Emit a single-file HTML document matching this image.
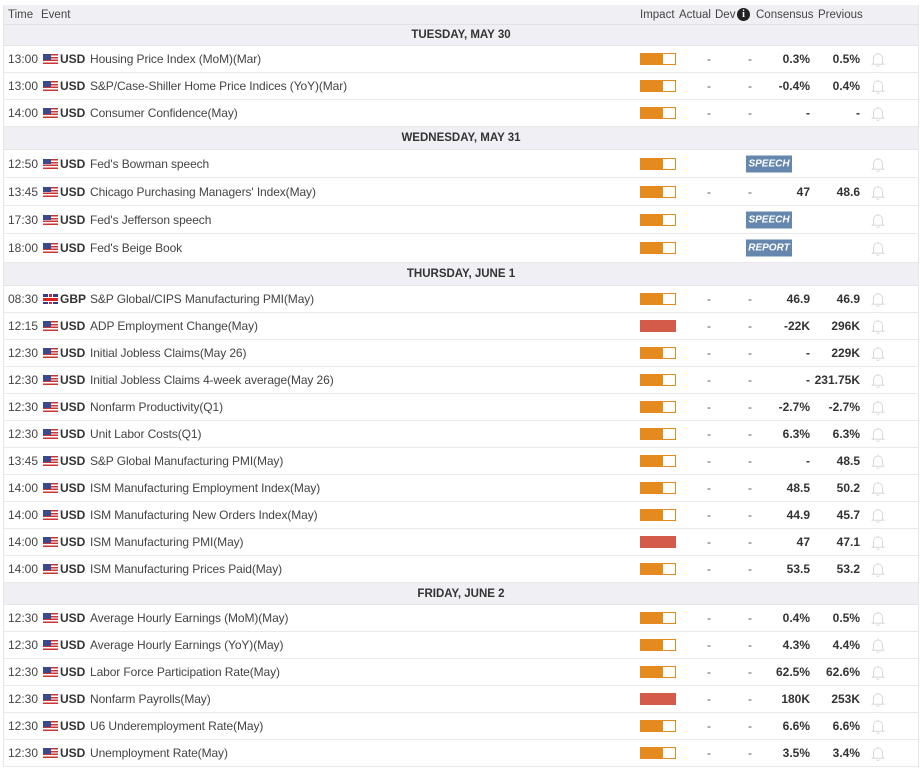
<!DOCTYPE html><html><head><meta charset="utf-8"><style>
*{margin:0;padding:0;box-sizing:border-box}
body{width:922px;height:773px;background:#fff;font-family:"Liberation Sans",Arial,sans-serif;font-size:12px;color:#333;position:relative;overflow:hidden}
.wrap{position:absolute;left:3px;top:5px;width:916px;border-left:1px solid #e6e6ea;border-right:1px solid #e6e6ea}
.hd{height:20px;background:#f0f0f4;border-bottom:1px solid #e0e0e6;position:relative;color:#444;font-size:11.5px}
.hd span{position:absolute;top:4px}
.day{background:#f0f0f4;text-align:center;font-weight:bold;font-size:11.5px;color:#333;border-bottom:1px solid #e6e6ea}
.r{position:relative;height:27px;border-bottom:1px solid #e9e9ec;font-size:12px}
.r>*{position:absolute;top:50%;transform:translateY(-50%)}
.t{left:4px;color:#444}
.f{left:39px;width:15px;height:10px;background:repeating-linear-gradient(#c33 0 1.43px,#fff 1.43px 2.86px)}
.f:before{content:"";position:absolute;left:0;top:0;width:8px;height:5.7px;background:#3b4a8c}
.g{left:39px;width:15px;height:10px;background:#2d3f8a}
.g:before{content:"";position:absolute;left:6px;top:0;width:3px;height:10px;background:#d22;box-shadow:1px 0 0 #fff,-1px 0 0 #fff}
.g:after{content:"";position:absolute;left:0;top:3.5px;width:15px;height:3px;background:#d22;box-shadow:0 -1px 0 #fff,0 1px 0 #fff}
.c{left:56px;font-weight:bold;color:#333}
.e{left:86px;color:#444;letter-spacing:-0.1px}
.i{left:636px;width:36px;height:12px;border:1px solid #e58a1f;background:linear-gradient(90deg,#e58a1f 22px,#fff 22px)}
.i.h{background:#d45a4a;border-color:#d45a4a}
.a{left:703px;color:#555}
.d{left:744px;color:#555}
.cs{right:108px;font-weight:bold;color:#333}
.pv{right:58px;font-weight:bold;color:#333}
.b{left:867px;width:14px;height:17px}
.bd{left:742px;width:46px;height:17px;background:#6687ad;color:#fff;font-size:10px;font-weight:bold;font-style:italic;text-align:center;line-height:17px}
</style></head><body>
<svg width="0" height="0" style="position:absolute"><defs><symbol id="bell" viewBox="0 0 14 17"><path d="M2.5 12.5V8a4.5 4.5 0 0 1 9 0v4.5l1.2 1.2H1.3z M5.5 15a1.6 1.6 0 0 0 3 0 M7 2.2v1.3" fill="none" stroke="#d8d8dc" stroke-width="1"/></symbol></defs></svg>
<div class="wrap">
<div class="hd"><span style="left:4px">Time</span><span style="left:37px">Event</span><span style="left:636px">Impact</span><span style="left:675px">Actual</span><span style="left:711px">Dev</span><span style="left:733px;top:3px;width:13px;height:13px;border-radius:50%;background:#222;color:#fff;font-weight:bold;font-size:10px;text-align:center;line-height:13px;font-family:'Liberation Serif',serif">i</span><span style="left:752px">Consensus</span><span style="left:814px">Previous</span></div>
<div class="day" style="height:21px;line-height:21px">TUESDAY, MAY 30</div>
<div class="r"><span class="t">13:00</span><i class="f"></i><span class="c">USD</span><span class="e">Housing Price Index (MoM)(Mar)</span><i class="i"></i><span class="a">-</span><span class="d">-</span><span class="cs">0.3%</span><span class="pv">0.5%</span><svg class="b"><use href="#bell"/></svg></div>
<div class="r"><span class="t">13:00</span><i class="f"></i><span class="c">USD</span><span class="e">S&amp;P/Case-Shiller Home Price Indices (YoY)(Mar)</span><i class="i"></i><span class="a">-</span><span class="d">-</span><span class="cs">-0.4%</span><span class="pv">0.4%</span><svg class="b"><use href="#bell"/></svg></div>
<div class="r"><span class="t">14:00</span><i class="f"></i><span class="c">USD</span><span class="e">Consumer Confidence(May)</span><i class="i"></i><span class="a">-</span><span class="d">-</span><span class="cs">-</span><span class="pv">-</span><svg class="b"><use href="#bell"/></svg></div>
<div class="day" style="height:23px;line-height:23px">WEDNESDAY, MAY 31</div>
<div class="r" style="height:28px"><span class="t">12:50</span><i class="f"></i><span class="c">USD</span><span class="e">Fed's Bowman speech</span><i class="i"></i><span class="bd">SPEECH</span><svg class="b"><use href="#bell"/></svg></div>
<div class="r" style="height:28px"><span class="t">13:45</span><i class="f"></i><span class="c">USD</span><span class="e">Chicago Purchasing Managers' Index(May)</span><i class="i"></i><span class="a">-</span><span class="d">-</span><span class="cs">47</span><span class="pv">48.6</span><svg class="b"><use href="#bell"/></svg></div>
<div class="r" style="height:28px"><span class="t">17:30</span><i class="f"></i><span class="c">USD</span><span class="e">Fed's Jefferson speech</span><i class="i"></i><span class="bd">SPEECH</span><svg class="b"><use href="#bell"/></svg></div>
<div class="r" style="height:29px"><span class="t">18:00</span><i class="f"></i><span class="c">USD</span><span class="e">Fed's Beige Book</span><i class="i"></i><span class="bd">REPORT</span><svg class="b"><use href="#bell"/></svg></div>
<div class="day" style="height:23px;line-height:23px">THURSDAY, JUNE 1</div>
<div class="r"><span class="t">08:30</span><i class="g"></i><span class="c">GBP</span><span class="e">S&amp;P Global/CIPS Manufacturing PMI(May)</span><i class="i"></i><span class="a">-</span><span class="d">-</span><span class="cs">46.9</span><span class="pv">46.9</span><svg class="b"><use href="#bell"/></svg></div>
<div class="r"><span class="t">12:15</span><i class="f"></i><span class="c">USD</span><span class="e">ADP Employment Change(May)</span><i class="i h"></i><span class="a">-</span><span class="d">-</span><span class="cs">-22K</span><span class="pv">296K</span><svg class="b"><use href="#bell"/></svg></div>
<div class="r"><span class="t">12:30</span><i class="f"></i><span class="c">USD</span><span class="e">Initial Jobless Claims(May 26)</span><i class="i"></i><span class="a">-</span><span class="d">-</span><span class="cs">-</span><span class="pv">229K</span><svg class="b"><use href="#bell"/></svg></div>
<div class="r"><span class="t">12:30</span><i class="f"></i><span class="c">USD</span><span class="e">Initial Jobless Claims 4-week average(May 26)</span><i class="i"></i><span class="a">-</span><span class="d">-</span><span class="cs">-</span><span class="pv">231.75K</span><svg class="b"><use href="#bell"/></svg></div>
<div class="r"><span class="t">12:30</span><i class="f"></i><span class="c">USD</span><span class="e">Nonfarm Productivity(Q1)</span><i class="i"></i><span class="a">-</span><span class="d">-</span><span class="cs">-2.7%</span><span class="pv">-2.7%</span><svg class="b"><use href="#bell"/></svg></div>
<div class="r"><span class="t">12:30</span><i class="f"></i><span class="c">USD</span><span class="e">Unit Labor Costs(Q1)</span><i class="i"></i><span class="a">-</span><span class="d">-</span><span class="cs">6.3%</span><span class="pv">6.3%</span><svg class="b"><use href="#bell"/></svg></div>
<div class="r"><span class="t">13:45</span><i class="f"></i><span class="c">USD</span><span class="e">S&amp;P Global Manufacturing PMI(May)</span><i class="i"></i><span class="a">-</span><span class="d">-</span><span class="cs">-</span><span class="pv">48.5</span><svg class="b"><use href="#bell"/></svg></div>
<div class="r"><span class="t">14:00</span><i class="f"></i><span class="c">USD</span><span class="e">ISM Manufacturing Employment Index(May)</span><i class="i"></i><span class="a">-</span><span class="d">-</span><span class="cs">48.5</span><span class="pv">50.2</span><svg class="b"><use href="#bell"/></svg></div>
<div class="r"><span class="t">14:00</span><i class="f"></i><span class="c">USD</span><span class="e">ISM Manufacturing New Orders Index(May)</span><i class="i"></i><span class="a">-</span><span class="d">-</span><span class="cs">44.9</span><span class="pv">45.7</span><svg class="b"><use href="#bell"/></svg></div>
<div class="r"><span class="t">14:00</span><i class="f"></i><span class="c">USD</span><span class="e">ISM Manufacturing PMI(May)</span><i class="i h"></i><span class="a">-</span><span class="d">-</span><span class="cs">47</span><span class="pv">47.1</span><svg class="b"><use href="#bell"/></svg></div>
<div class="r"><span class="t">14:00</span><i class="f"></i><span class="c">USD</span><span class="e">ISM Manufacturing Prices Paid(May)</span><i class="i"></i><span class="a">-</span><span class="d">-</span><span class="cs">53.5</span><span class="pv">53.2</span><svg class="b"><use href="#bell"/></svg></div>
<div class="day" style="height:22px;line-height:22px">FRIDAY, JUNE 2</div>
<div class="r"><span class="t">12:30</span><i class="f"></i><span class="c">USD</span><span class="e">Average Hourly Earnings (MoM)(May)</span><i class="i"></i><span class="a">-</span><span class="d">-</span><span class="cs">0.4%</span><span class="pv">0.5%</span><svg class="b"><use href="#bell"/></svg></div>
<div class="r"><span class="t">12:30</span><i class="f"></i><span class="c">USD</span><span class="e">Average Hourly Earnings (YoY)(May)</span><i class="i"></i><span class="a">-</span><span class="d">-</span><span class="cs">4.3%</span><span class="pv">4.4%</span><svg class="b"><use href="#bell"/></svg></div>
<div class="r"><span class="t">12:30</span><i class="f"></i><span class="c">USD</span><span class="e">Labor Force Participation Rate(May)</span><i class="i"></i><span class="a">-</span><span class="d">-</span><span class="cs">62.5%</span><span class="pv">62.6%</span><svg class="b"><use href="#bell"/></svg></div>
<div class="r"><span class="t">12:30</span><i class="f"></i><span class="c">USD</span><span class="e">Nonfarm Payrolls(May)</span><i class="i h"></i><span class="a">-</span><span class="d">-</span><span class="cs">180K</span><span class="pv">253K</span><svg class="b"><use href="#bell"/></svg></div>
<div class="r"><span class="t">12:30</span><i class="f"></i><span class="c">USD</span><span class="e">U6 Underemployment Rate(May)</span><i class="i"></i><span class="a">-</span><span class="d">-</span><span class="cs">6.6%</span><span class="pv">6.6%</span><svg class="b"><use href="#bell"/></svg></div>
<div class="r"><span class="t">12:30</span><i class="f"></i><span class="c">USD</span><span class="e">Unemployment Rate(May)</span><i class="i"></i><span class="a">-</span><span class="d">-</span><span class="cs">3.5%</span><span class="pv">3.4%</span><svg class="b"><use href="#bell"/></svg></div>
</div>
</body></html>
